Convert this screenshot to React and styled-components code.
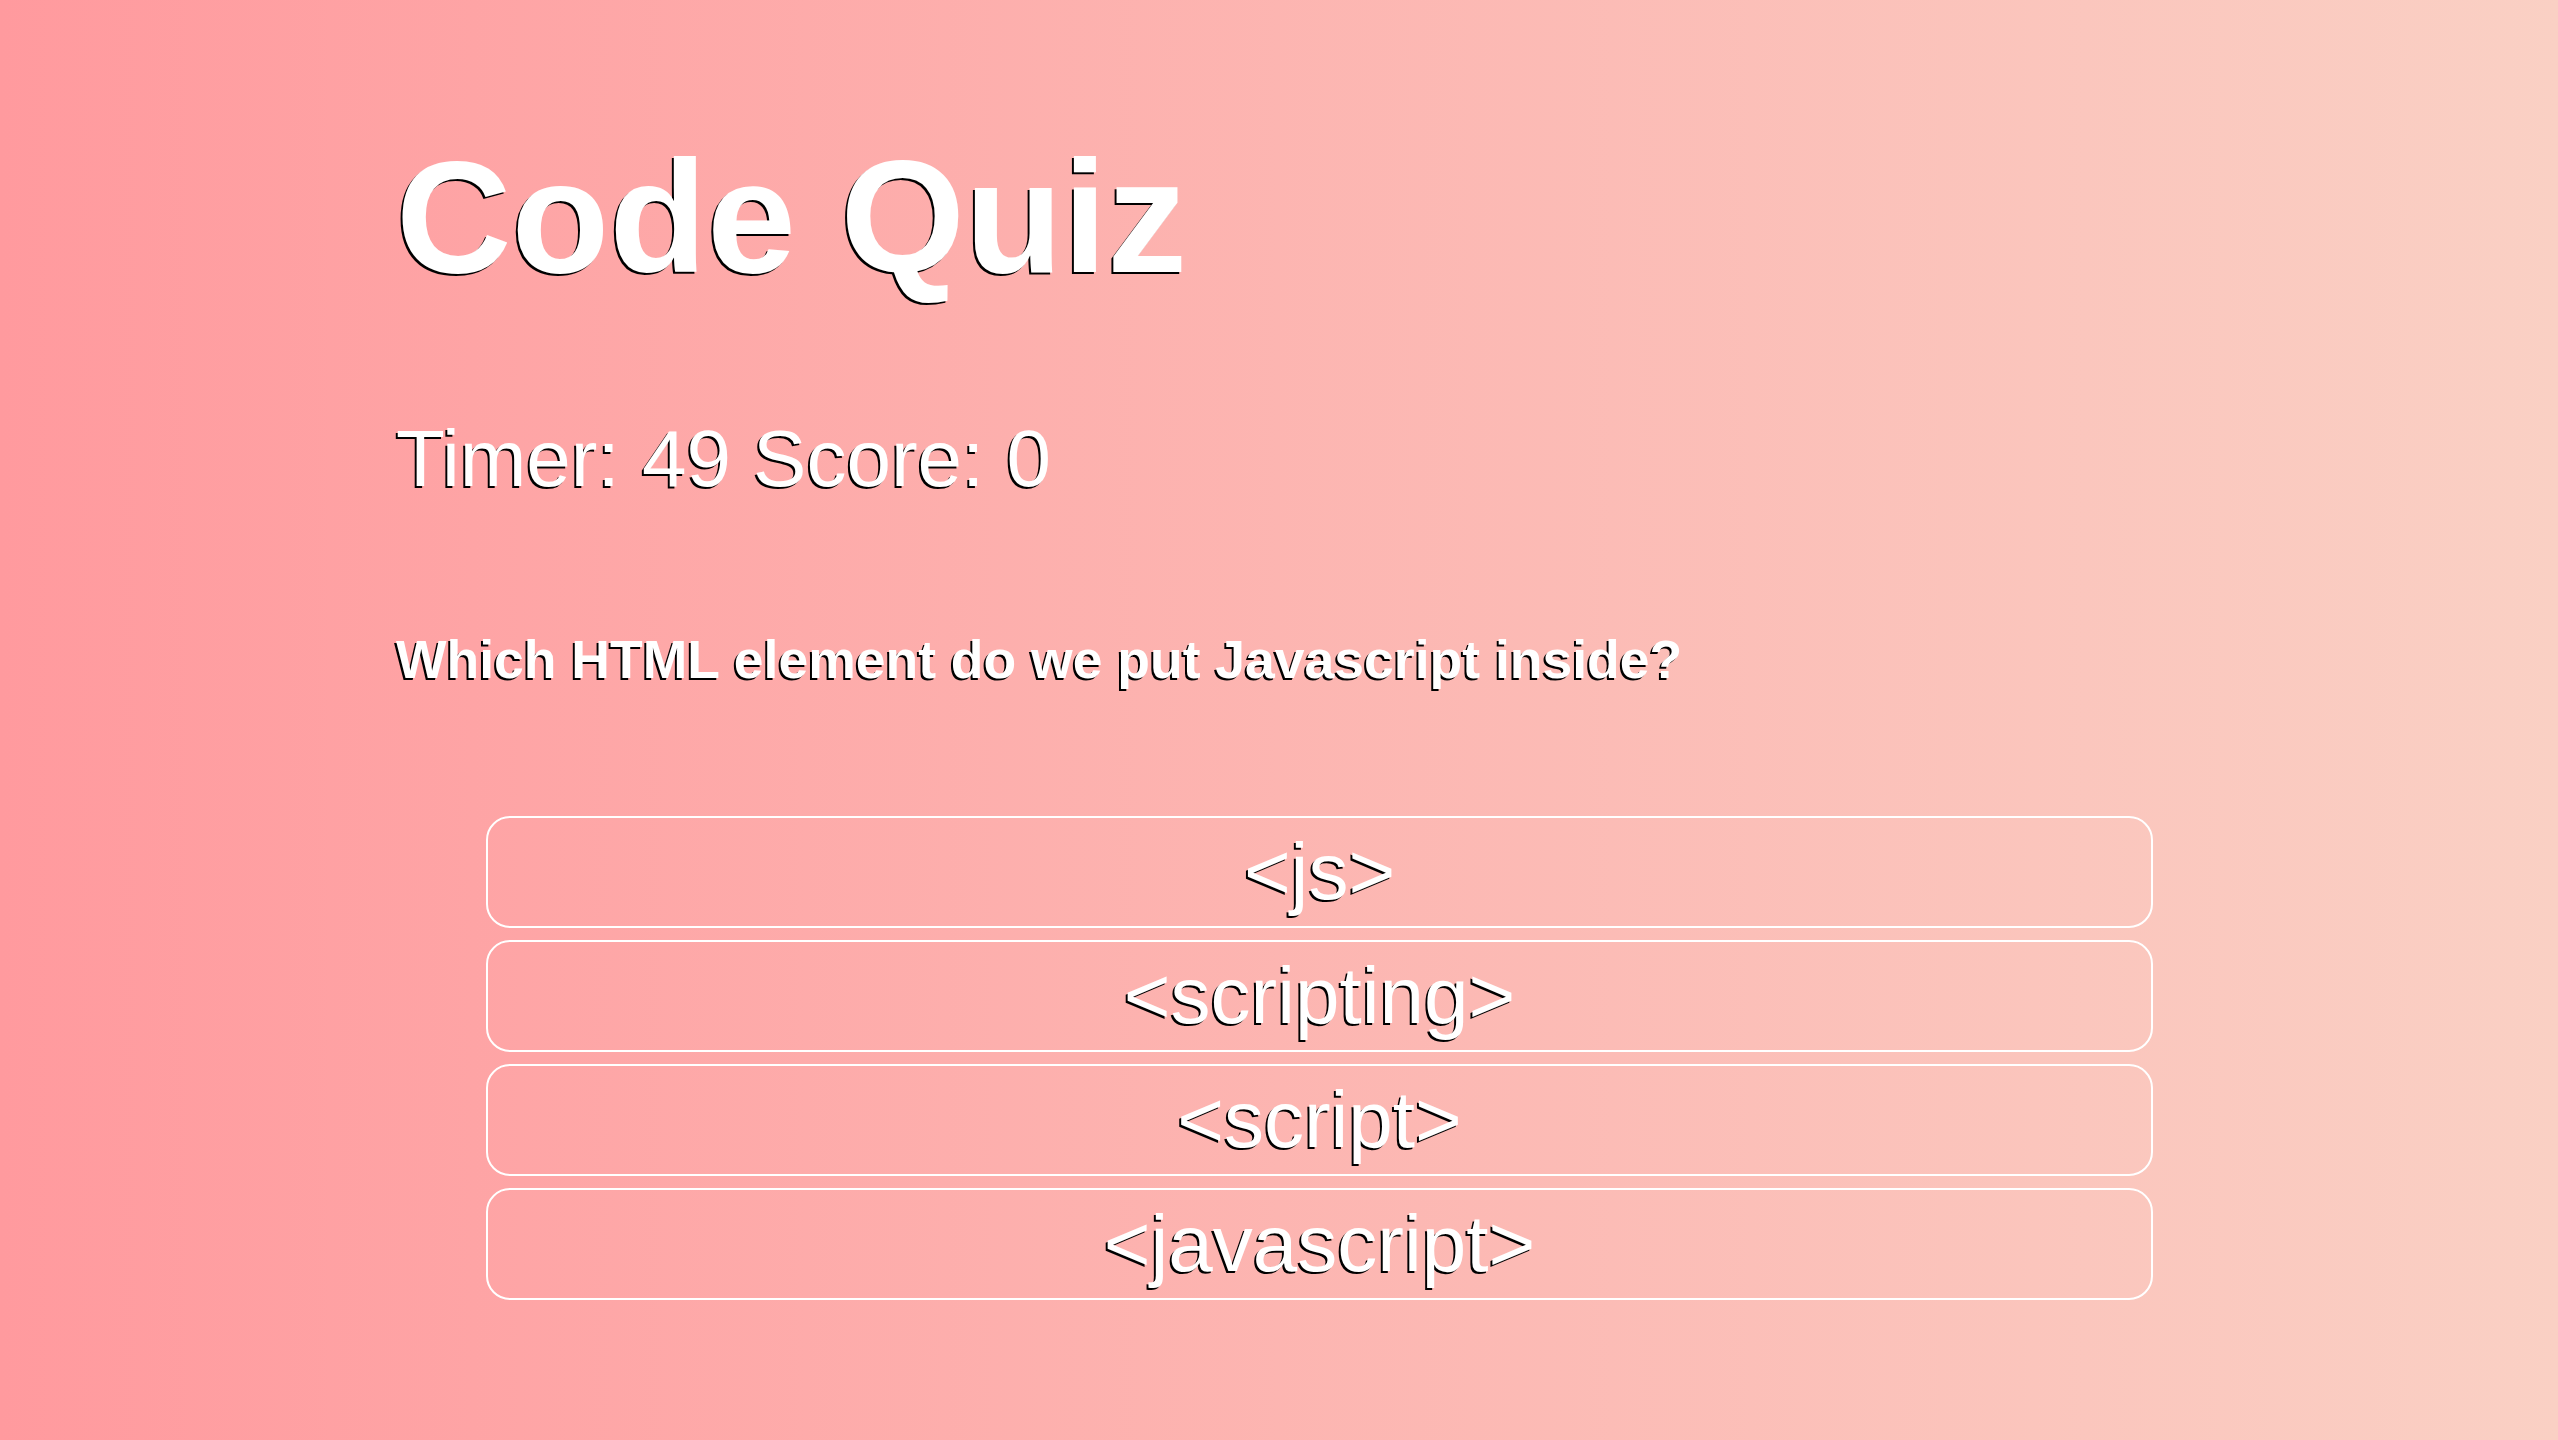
import React from 'react'
import styled, {createGlobalStyle} from 'styled-components'

const GlobalStyle = createGlobalStyle`
  html, body {
    margin: 0;
    padding: 0;
  }
  body {
    min-height: 100vh;
    background: linear-gradient(to right, #ff9a9e 0%, #fad0c4 100%);
    font-family: "Liberation Sans", Arial, sans-serif;
    color: #fff;
  }
`

const QuizPage = styled.main`
  min-height: 100vh;
  box-sizing: border-box;
  padding: 125px 392px 0 396px;
  text-shadow: -2px 2px 0 #000;
`

const Title = styled.h1`
  margin: 0;
  font-size: 160px;
  font-weight: 700;
`

const Stats = styled.p`
  margin: 104px 0 0 0;
  font-size: 80px;
  font-weight: 400;
`

const Question = styled.h2`
  margin: 124px 0 0 0;
  font-size: 53.5px;
  font-weight: 700;
`

const AnswerList = styled.div`
  display: flex;
  flex-direction: column;
  gap: 12px;
  margin: 126px 13px 0 90px;
`

const AnswerButton = styled.button`
  display: block;
  width: 100%;
  box-sizing: border-box;
  height: 112px;
  padding: 8px 0;
  background: transparent;
  border: 2px solid #fff;
  border-radius: 24px;
  color: #fff;
  font-family: "Liberation Sans", Arial, sans-serif;
  font-size: 80px;
  line-height: normal;
  text-align: center;
  text-shadow: -2px 2px 0 #000;
  cursor: pointer;
`

const answers = ['<js>', '<scripting>', '<script>', '<javascript>']

const App = () => {
  return (
    <>
      <GlobalStyle />
      <QuizPage>
        <Title>Code Quiz</Title>
        <Stats>Timer: 49 Score: 0</Stats>
        <Question>Which HTML element do we put Javascript inside?</Question>
        <AnswerList>
          {answers.map(a => (
            <AnswerButton key={a}>{a}</AnswerButton>
          ))}
        </AnswerList>
      </QuizPage>
    </>
  )
}

export default App
